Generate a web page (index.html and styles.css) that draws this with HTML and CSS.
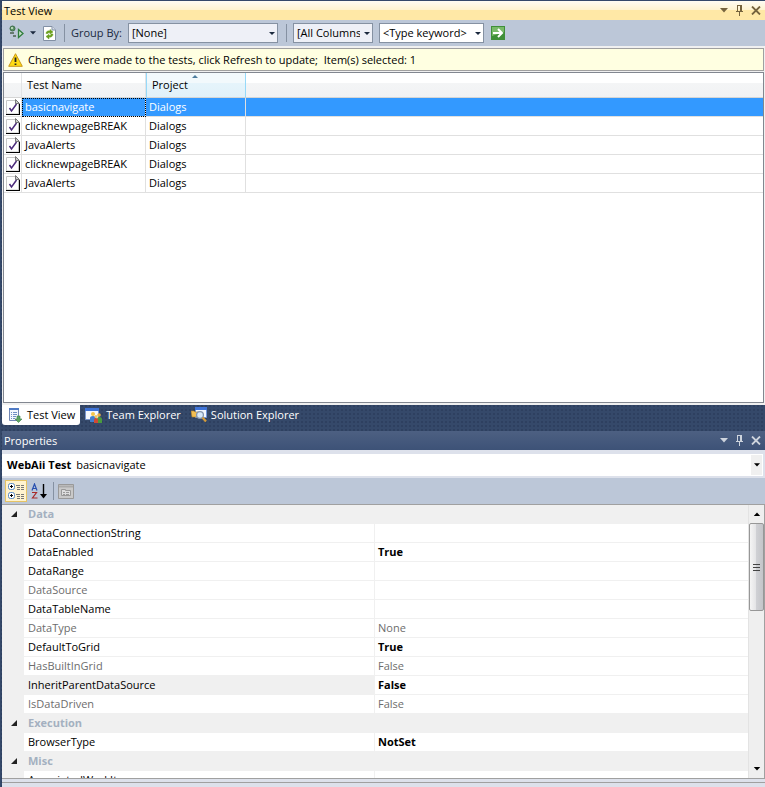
FILE: index.html
```html
<!DOCTYPE html>
<html lang="en">

<head>
    <meta charset="UTF-8">
    <meta name="viewport" content="width=device-width, initial-scale=1.0">
    <title>Test View</title>
    <link rel="stylesheet" href="styles.css">
</head>

<body>
    <!-- shared icons -->
    <svg class="sprite">
        <symbol id="i-down" viewBox="0 0 8 5"><path d="M0 0h8L4 4.500z" fill="currentColor"/></symbol>
        <symbol id="i-pin" viewBox="0 0 7 11">
            <path d="M1 0h5v6h1v1H4v4H3V7H0V6h1zM2 1v5h2V1z" fill="currentColor" fill-rule="evenodd"/>
        </symbol>
        <symbol id="i-close" viewBox="0 0 10 9"><path d="M1 .5l8 8M9 .5l-8 8" fill="none" stroke="currentColor" stroke-width="1.800"/></symbol>
        <symbol id="i-test" viewBox="0 0 14 16">
            <path d="M.5 1.500h9l3 3v10.500H.5z" fill="#fff" stroke="#c8c8c8"/>
            <path d="M0 15.500h14M13.500 5v11" fill="none" stroke="#000"/>
            <path d="M9.500 .5v4h4z" fill="#ccc" stroke="#777"/>
            <path d="M3.500 9l2 3 5-7" fill="none" stroke="#4b2a7b" stroke-width="1.500"/>
        </symbol>
        <symbol id="i-node" viewBox="0 0 6 6"><path d="M6 0v6H0z" fill="#222"/></symbol>
    </svg>

    <section class="panel test-view">
        <header class="title title-active">
            <h2>Test View</h2>
            <button class="tool" aria-label="Window position"><svg width="8" height="5"><use href="#i-down"/></svg></button>
            <button class="tool" aria-label="Auto hide"><svg width="7" height="11"><use href="#i-pin"/></svg></button>
            <button class="tool" aria-label="Close"><svg width="10" height="9"><use href="#i-close"/></svg></button>
        </header>

        <div class="toolbar">
            <button class="tool run" aria-label="Run selection">
                <svg width="16" height="16" viewBox="0 0 16 16">
                    <circle cx="3.500" cy="3.500" r="2.500" fill="#5c9466" stroke="#3d6b49"/>
                    <circle cx="3" cy="3" r="1" fill="#d5ecd2"/>
                    <path d="M1 8h4M4 11h3" stroke="#667a70" stroke-width="2"/>
                    <path d="M9.500 4.500v8l4.500-4z" fill="#c5dfc9" stroke="#2f7d3b" stroke-width="1.300"/>
                </svg>
                <svg width="6" height="4"><use href="#i-down"/></svg>
            </button>
            <button class="tool" aria-label="Refresh">
                <svg width="13" height="15" viewBox="0 0 13 15">
                    <path d="M.5 .5h8.500l3.500 3.500v10.500H.5z" fill="#fff" stroke="#8290a5"/>
                    <path d="M9 .5v3.500h3.500" fill="#d6deea" stroke="#8290a5"/>
                    <path d="M3 7.500c0-2 2-3 4-2.500V3.500L10 6 7 8V6.800C5.500 6.500 5 7 5 7.500zM10 8c0 2.500-2 3.500-4 3V13L3 10.500 6 8.300v1.200C7.500 9.700 8 9 8 8z" fill="#6a9f1e" stroke="#6a9f1e" stroke-width=".5"/>
                </svg>
            </button>
            <span class="sep"></span>
            <label for="groupBy">Group By:</label>
            <span class="combo combo-group">
                <select id="groupBy"><option>[None]</option></select>
            </span>
            <span class="sep"></span>
            <span class="combo combo-columns">
                <select aria-label="Filter column"><option>[All Columns]</option></select>
            </span>
            <span class="combo combo-keyword">
                <select aria-label="Keyword"><option>&lt;Type keyword&gt;</option></select>
            </span>
            <button class="tool" aria-label="Go">
                <svg width="14" height="14" viewBox="0 0 14 14">
                    <path d="M0 0h14v14H0z" fill="#3f8f38"/>
                    <path d="M1 1h12v5L1 10z" fill="#79ba69"/>
                    <path d="M2 7h9M7 3l4 4-4 4" fill="none" stroke="#fff" stroke-width="2"/>
                </svg>
            </button>
        </div>

        <div class="notice">
            <svg width="15" height="14" viewBox="0 0 15 14">
                <path d="M7.500 .7L14.300 13.300H.7z" fill="#ffdc16" stroke="#c9971b" stroke-linejoin="round"/>
                <path d="M7.500 4.500v4.500M7.500 10.500v1.500" stroke="#222" stroke-width="1.800"/>
            </svg>
            <span>Changes were made to the tests, click Refresh to update;&nbsp; Item(s) selected: 1</span>
        </div>

        <div class="test-list">
            <table class="tests">
                <colgroup><col class="c-icon"><col class="c-name"><col class="c-project"><col></colgroup>
                <thead>
                    <tr><th></th><th>Test Name</th><th class="sorted">Project</th><th></th></tr>
                </thead>
                <tbody>
                    <tr class="selected"><td><svg width="14" height="16"><use href="#i-test"/></svg></td><td>basicnavigate</td><td>Dialogs</td><td></td></tr>
                    <tr><td><svg width="14" height="16"><use href="#i-test"/></svg></td><td>clicknewpageBREAK</td><td>Dialogs</td><td></td></tr>
                    <tr><td><svg width="14" height="16"><use href="#i-test"/></svg></td><td>JavaAlerts</td><td>Dialogs</td><td></td></tr>
                    <tr><td><svg width="14" height="16"><use href="#i-test"/></svg></td><td>clicknewpageBREAK</td><td>Dialogs</td><td></td></tr>
                    <tr><td><svg width="14" height="16"><use href="#i-test"/></svg></td><td>JavaAlerts</td><td>Dialogs</td><td></td></tr>
                </tbody>
            </table>
        </div>
    </section>

    <nav class="tabs">
        <a href="#" class="active">
            <svg width="16" height="16" viewBox="0 0 16 16">
                <path d="M2.500 1.500h9v12h-9z" fill="#f4f8fd" stroke="#7187b5"/>
                <path d="M2 1h10v2H2z" fill="#4f7ac4"/>
                <path d="M4 5.500h1M6 5.500h4M4 7.500h1M6 7.500h4M4 9.500h1M6 9.500h3M4 11.500h1M6 11.500h2" stroke="#6f8fc4"/>
                <path d="M10 9h3v3h2l-3.500 3.500L8 12h2z" fill="#5fa463" stroke="#3b7f48" stroke-width=".6"/>
            </svg>Test View</a>
        <a href="#">
            <svg width="17" height="16" viewBox="0 0 17 16">
                <path d="M.5 1.500h13v11H.5z" fill="#f4f8ff" stroke="#7896d0"/>
                <path d="M0 1h14v3H0z" fill="#3f74d8"/>
                <circle cx="8" cy="7" r="2" fill="#f3c64b"/><path d="M5 15v-4q0-2 3-2t3 2v4z" fill="#407fd0"/>
                <circle cx="14" cy="8" r="1.800" fill="#e7ad45"/><path d="M12 16v-4q0-2 2.500-2t2.500 2v4z" fill="#4a9a3f"/>
                <circle cx="11" cy="9.500" r="1.500" fill="#f5c75a"/><path d="M9 16v-3q0-2 2-2t2 2v3z" fill="#d04a35"/>
            </svg>Team Explorer</a>
        <a href="#">
            <svg width="16" height="16" viewBox="0 0 16 16">
                <path d="M4.500 .5h11v10h-11z" fill="#f2f7ff" stroke="#6f95db"/>
                <path d="M4 0h12v3H4z" fill="#3f74d8"/>
                <path d="M0 4h3l1 1h4v5H1z" fill="#f2bf54" stroke="#b98421" stroke-width=".6"/>
                <circle cx="9" cy="8" r="3.400" fill="#d7e9fa" stroke="#8395ae" stroke-width="1.300"/>
                <path d="M11.500 10.500l3.500 4" stroke="#d59c39" stroke-width="2.200"/>
            </svg>Solution Explorer</a>
    </nav>

    <section class="panel properties">
        <header class="title">
            <h2>Properties</h2>
            <button class="tool" aria-label="Window position"><svg width="8" height="5"><use href="#i-down"/></svg></button>
            <button class="tool" aria-label="Auto hide"><svg width="7" height="11"><use href="#i-pin"/></svg></button>
            <button class="tool" aria-label="Close"><svg width="10" height="9"><use href="#i-close"/></svg></button>
        </header>

        <div class="object">
            <button class="object-picker">
                <span><b>WebAii Test</b> basicnavigate</span>
                <i class="drop"><svg width="6" height="4"><use href="#i-down"/></svg></i>
            </button>
        </div>

        <div class="toolbar prop-toolbar">
            <button class="tool pressed" aria-label="Categorized">
                <svg width="17" height="16" viewBox="0 0 17 16">
                    <rect x=".5" y=".5" width="6" height="6" rx="2" fill="#fff" stroke="#5b8bc4"/>
                    <rect x=".5" y="9.500" width="6" height="6" rx="2" fill="#fff" stroke="#5b8bc4"/>
                    <path d="M2 3.500h3M3.500 2v3M2 12.500h3M3.500 11v3" stroke="#000"/>
                    <path d="M8 2.500h4M9 4.500h3M9 6.500h3M8 11.500h4M9 13.500h3M9 15.500h3M13 2.500h3M13 4.500h3M13 6.500h3M13 11.500h3M13 13.500h3M13 15.500h3" stroke="#777"/>
                </svg>
            </button>
            <button class="tool" aria-label="Alphabetical">
                <svg width="16" height="16" viewBox="0 0 16 16">
                    <path d="M1 7.500l2.500-6.500L6 7.500M2 5.500h3" fill="none" stroke="#2850b0" stroke-width="1.200"/>
                    <path d="M1 9.500h4.500L1.500 15H6.500" fill="none" stroke="#a82a2a" stroke-width="1.200"/>
                    <path d="M12.500 1v13" stroke="#000" stroke-width="1.400"/>
                    <path d="M9 11h7l-3.500 4.500z" fill="#000"/>
                </svg>
            </button>
            <span class="sep"></span>
            <button class="tool" aria-label="Property pages" disabled>
                <svg width="16" height="15" viewBox="0 0 16 15">
                    <path d="M.5 .5h15v14H.5z" fill="#c9c9c9" stroke="#999"/>
                    <path d="M1 2.500h14" stroke="#aaa" stroke-width="2"/>
                    <path d="M3.500 5.500h4v1h5v5h-9z" fill="#ddd" stroke="#999"/>
                    <path d="M5 8.500h2M8 8.500h3M5 10.500h2M8 10.500h3" stroke="#999"/>
                </svg>
            </button>
        </div>

        <div class="prop-body">
            <div class="prop-list">
                <table class="props">
                    <colgroup><col class="c-gutter"><col class="c-prop"><col></colgroup>
                    <tbody>
                        <tr class="category"><td><svg width="6" height="6"><use href="#i-node"/></svg></td><th colspan="2">Data</th></tr>
                        <tr><td></td><th>DataConnectionString</th><td></td></tr>
                        <tr><td></td><th>DataEnabled</th><td>True</td></tr>
                        <tr><td></td><th>DataRange</th><td></td></tr>
                        <tr class="readonly"><td></td><th>DataSource</th><td></td></tr>
                        <tr><td></td><th>DataTableName</th><td></td></tr>
                        <tr class="readonly"><td></td><th>DataType</th><td>None</td></tr>
                        <tr><td></td><th>DefaultToGrid</th><td>True</td></tr>
                        <tr class="readonly"><td></td><th>HasBuiltInGrid</th><td>False</td></tr>
                        <tr class="current"><td></td><th>InheritParentDataSource</th><td>False</td></tr>
                        <tr class="readonly"><td></td><th>IsDataDriven</th><td>False</td></tr>
                        <tr class="category"><td><svg width="6" height="6"><use href="#i-node"/></svg></td><th colspan="2">Execution</th></tr>
                        <tr><td></td><th>BrowserType</th><td>NotSet</td></tr>
                        <tr class="category"><td><svg width="6" height="6"><use href="#i-node"/></svg></td><th colspan="2">Misc</th></tr>
                        <tr><td></td><th>AssociatedWorkItem</th><td></td></tr>
                    </tbody>
                </table>
            </div>
            <div class="scrollbar">
                <button aria-label="Scroll up"><svg class="up" width="8" height="4"><use href="#i-down"/></svg></button>
                <div class="thumb"><i></i><i></i><i></i></div>
                <button class="scroll-down" aria-label="Scroll down"><svg width="8" height="4"><use href="#i-down"/></svg></button>
            </div>
        </div>
        <div class="prop-help"></div>
    </section>
</body>

</html>
```
FILE: styles.css
```css
* {
    box-sizing: border-box;
}

body {
    display: grid;
    grid-template-rows: 404fr 26px 356fr;
    height: 100vh;
    margin: 0;
    padding: 1px 0 0 2px;
    overflow: hidden;
    background-color: #35496a;
    background-image: radial-gradient(#2e4060 1px, transparent 1px);
    background-size: 4px 4px;
    font: 11px/18px "Open Sans", "Noto Sans", sans-serif;
    color: #000;
}

button,
select {
    font: inherit;
    color: inherit;
}

svg {
    display: block;
    flex: none;
}

.sprite {
    position: absolute;
    width: 0;
    height: 0;
}

.panel {
    display: flex;
    flex-direction: column;
    min-height: 0;
    min-width: 0;
}

.test-view {
    background: #f0f0f0;
}

/* title bars */
.title {
    display: flex;
    flex: none;
    align-items: center;
    gap: 8px;
    height: 19px;
    padding: 0 4px 0 2px;
    background: linear-gradient(#4d6082, #3d5277);
    color: #ced4dd;
}

.title h2 {
    flex: 1;
    margin: 0;
    font-size: 11px;
    font-weight: normal;
    color: #fff;
}

.title-active {
    background: linear-gradient(#fffcf3, #fff3cd 50%, #ffe8a6 50%);
    color: #75633d;
}

.title-active h2 {
    color: #000;
}

.tool {
    display: flex;
    align-items: center;
    flex: none;
    padding: 0;
    border: 0;
    background: none;
}

/* toolbars */
.toolbar {
    display: flex;
    flex: none;
    align-items: center;
    height: 26px;
    padding-left: 7px;
    gap: 6px;
    background: #bcc7d8;
    color: #1b293e;
}

.run {
    gap: 5px;
    margin-right: 1px;
}

.sep {
    width: 1px;
    height: 18px;
    margin: 0 0 0 2px;
    background: #8591a2;
}

.combo {
    position: relative;
    height: 20px;
    border: 1px solid #8591a2;
    background: #eef0f7;
    color: #000;
}

.toolbar .sep:first-of-type {
    margin-left: 2px;
}

.combo select {
    width: 100%;
    height: 18px;
    padding: 0 12px 0 3px;
    border: 0;
    appearance: none;
    background: none;
}

.combo::after {
    content: "";
    position: absolute;
    right: 2px;
    top: 8px;
    border: 3px solid transparent;
    border-top-color: #1b293e;
}

.combo-group {
    width: 150px;
}

.combo-columns {
    width: 80px;
}

.combo-keyword {
    width: 105px;
    background: #fff;
}

.combo-keyword + .tool {
    margin-left: 1px;
}

/* notice */
.notice {
    display: flex;
    flex: none;
    align-items: center;
    gap: 5px;
    height: 23px;
    margin: 2px 1px 1px;
    padding-left: 4px;
    border: 1px solid #a0a0a0;
    background: #ffffe1;
    white-space: nowrap;
}

/* test list */
.test-list {
    flex: 1;
    min-height: 0;
    margin: 0 1px 2px;
    border: 1px solid #828790;
    background: #fff;
    overflow: hidden;
}

table {
    width: 100%;
    border-collapse: separate;
    border-spacing: 0;
    table-layout: fixed;
}

th,
td {
    padding: 0;
    font-weight: normal;
    text-align: left;
    white-space: nowrap;
    overflow: hidden;
}

.c-icon {
    width: 18px;
}

.c-name {
    width: 124px;
}

.c-project {
    width: 100px;
}

.tests th {
    height: 25px;
    padding-left: 5px;
    border-right: 1px solid #e2e3e5;
    border-bottom: 1px solid #d5d5d5;
    background: linear-gradient(#fff 42%, #f4f5f6 42%, #f1f2f4);
}

.tests .sorted {
    position: relative;
    border-right-color: #96d9f9;
    border-left: 1px solid #96d9f9;
    background: linear-gradient(#f2f9fc 42%, #e5f4fb 42%, #e1f1f9);
}

.sorted::before {
    content: "";
    position: absolute;
    left: 45px;
    top: 2px;
    border: 3px solid transparent;
    border-top: 0;
    border-bottom-color: #4d7d9e;
}

.tests td {
    height: 19px;
    padding-left: 3px;
    border-right: 1px solid #e0e0e0;
    border-bottom: 1px solid #e0e0e0;
}

.tests td:first-child {
    padding-left: 2px;
}

.tests th:last-child,
.tests td:last-child {
    border-right: 0;
}

.selected td:not(:first-child) {
    background: #3399ff;
    color: #fff;
}

.selected td:nth-child(2) {
    outline: 1px dotted #000;
    outline-offset: -1px;
}

/* tabs */
.tabs {
    display: flex;
    align-items: flex-start;
}

.tabs a {
    display: flex;
    align-items: center;
    gap: 4px;
    height: 20px;
    padding: 0 5px;
    color: #fff;
    text-decoration: none;
    white-space: nowrap;
}

.tabs .active {
    border-radius: 0 0 3px 3px;
    background: #fff;
    color: #000;
}

/* properties */
.properties {
    background: #dde1eb;
}

.object {
    flex: none;
    padding: 4px 2px 2px 0;
}

.object-picker {
    display: flex;
    align-items: center;
    justify-content: space-between;
    width: 100%;
    height: 22px;
    padding: 0 1px 0 5px;
    border: 0;
    background: #fff;
}

.object-picker b {
    margin-right: 2px;
}

.drop {
    display: flex;
    align-items: center;
    justify-content: center;
    width: 11px;
    height: 20px;
    background: #f0f0f0;
}

.prop-toolbar {
    padding-left: 3px;
    gap: 4px;
}

.pressed {
    justify-content: center;
    width: 22px;
    height: 22px;
    border: 1px solid #e5c365;
    background: #fff3cf;
}

.prop-body {
    display: flex;
    flex: 1;
    min-height: 0;
    border: 1px solid #a0a0a0;
    border-left: 0;
    background: #f0f0f0;
}

.prop-list {
    flex: 1;
    min-width: 0;
    overflow: hidden;
}

.c-gutter {
    width: 22px;
}

.c-prop {
    width: 351px;
}

.props th,
.props td {
    height: 19px;
    padding-left: 4px;
    border-bottom: 1px solid #f0f0f0;
    background: #fff;
}

.props th {
    border-right: 1px solid #f0f0f0;
}

.props td:last-child {
    padding-left: 3px;
    font-weight: bold;
}

.props td:first-child {
    padding-left: 9px;
    background: #f0f0f0;
}

.props .category th {
    background: #f0f0f0;
    color: #a4b0c0;
    font-weight: bold;
}

.props .readonly th,
.props .readonly td {
    color: #6d6d6d;
    font-weight: normal;
}

.props .current th {
    background: #f0f0f0;
}

/* scrollbar */
.scrollbar {
    display: flex;
    flex-direction: column;
    width: 16px;
    background: #efefef;
    border-left: 1px solid #e3e3e3;
}

.scrollbar button {
    display: flex;
    align-items: center;
    justify-content: center;
    height: 18px;
    padding: 0;
    border: 0;
    background: none;
}

.up {
    transform: rotate(180deg);
}

.scroll-down {
    margin-top: auto;
}

.thumb {
    display: flex;
    flex-direction: column;
    align-items: center;
    justify-content: center;
    gap: 2px;
    height: 88px;
    border: 1px solid #979797;
    border-radius: 2px;
    background: linear-gradient(90deg, #f5f5f5, #e4e4e6 45%, #cfd0d4 50%, #c4c5c9);
}

.thumb i {
    width: 7px;
    height: 1px;
    background: #444;
}

.prop-help {
    flex: none;
    height: 5px;
    margin-top: 3px;
    border-top: 1px solid #a0a0a0;
}
```
